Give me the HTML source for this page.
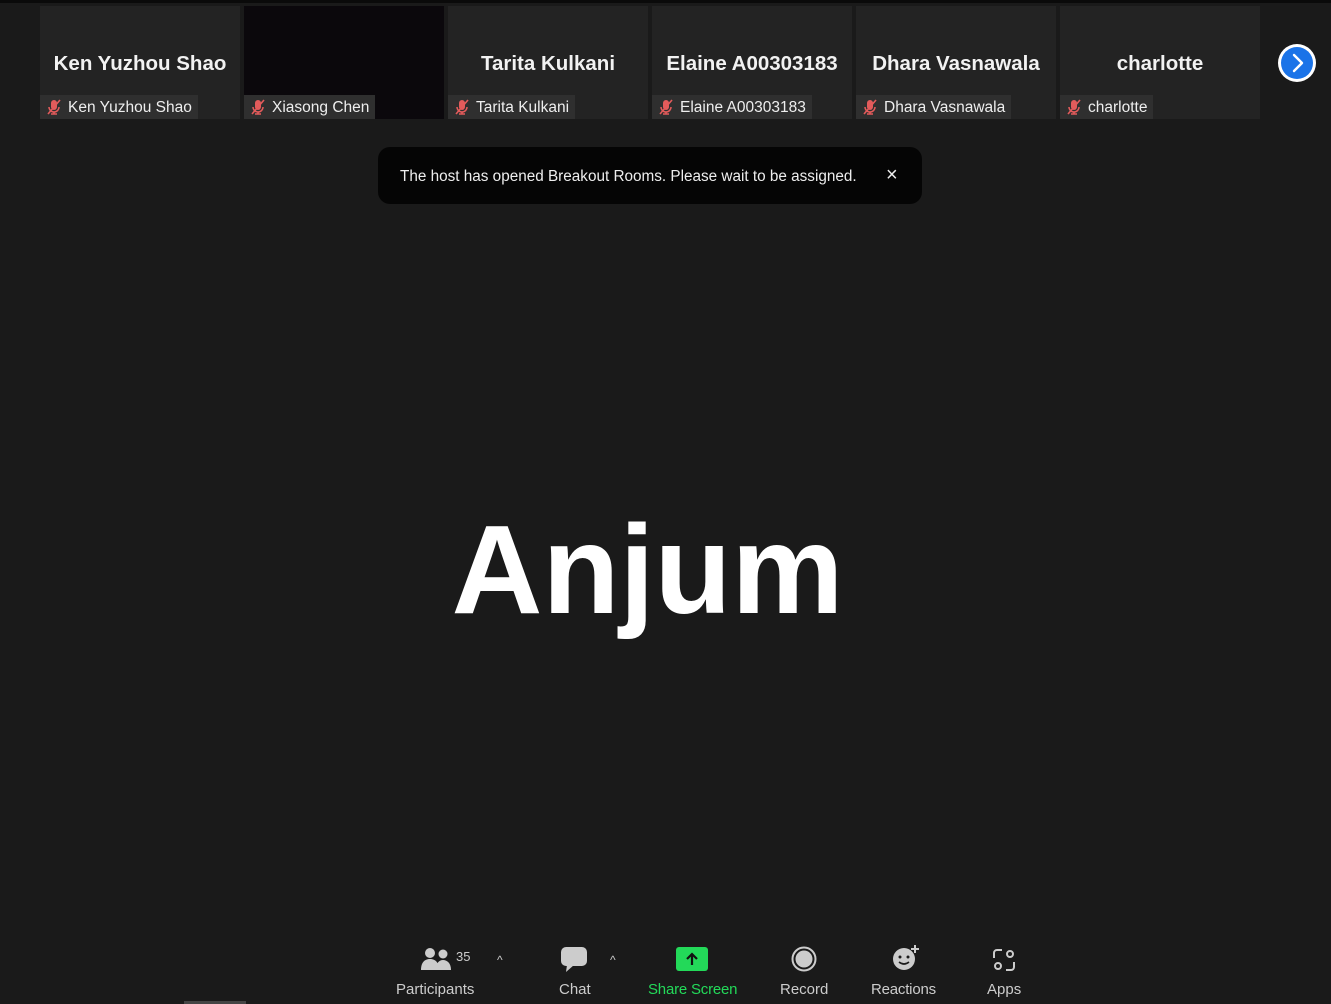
<!DOCTYPE html>
<html><head><style>
body{margin:0;width:1331px;height:1004px;background:#1a1a1a;font-family:"Liberation Sans",sans-serif;position:relative;overflow:hidden;color:#fff}
.top{position:absolute;left:0;top:0;width:1331px;height:3px;background:#0a0a0a}
.tile{position:absolute;top:6px;width:200px;height:113px;background:#232323}
.tile .big{position:absolute;top:46px;left:0;width:100%;text-align:center;font-weight:bold;font-size:20.5px;color:#f2f2f2;white-space:nowrap}
.tile .lbl{position:absolute;left:0;bottom:0;height:24px;line-height:26px;background:#2f2f2f;font-size:15.5px;color:#eee;padding:0 6px 0 28px;white-space:nowrap}
.mic{position:absolute;left:6px;top:4px}
.toast{position:absolute;left:378px;top:147px;width:544px;height:57px;background:#050505;border-radius:12px;font-size:15.3px;color:#eee}
.toast span{position:absolute;left:22px;top:21px}
.toast b{position:absolute;left:508px;top:17px;font-weight:normal;font-size:20px}
.anjum{position:absolute;left:0;width:1295px;top:497px;text-align:center;font-weight:bold;font-size:126px;color:#fff}
.tb{position:absolute;top:981px;font-size:15px;color:#ccc}
</style></head><body>
<div class="top"></div>
<div class="tile" style="left:40px"><div class="big">Ken Yuzhou Shao</div><div class="lbl"><svg class="mic" width="16" height="16" viewBox="0 0 16 16"><rect x="5" y="1" width="6" height="10" rx="3" fill="#e35b5b"/><path d="M3 8a5 5 0 0 0 10 0M8 13v2M5 15h6" stroke="#e35b5b" stroke-width="1.5" fill="none"/><path d="M2 15L14 1" stroke="#e35b5b" stroke-width="1.6"/></svg>Ken Yuzhou Shao</div></div>
<div class="tile" style="left:244px;background:#0b080c"><div class="lbl"><svg class="mic" width="16" height="16" viewBox="0 0 16 16"><rect x="5" y="1" width="6" height="10" rx="3" fill="#e35b5b"/><path d="M3 8a5 5 0 0 0 10 0M8 13v2M5 15h6" stroke="#e35b5b" stroke-width="1.5" fill="none"/><path d="M2 15L14 1" stroke="#e35b5b" stroke-width="1.6"/></svg>Xiasong Chen</div></div>
<div class="tile" style="left:448px"><div class="big">Tarita Kulkani</div><div class="lbl"><svg class="mic" width="16" height="16" viewBox="0 0 16 16"><rect x="5" y="1" width="6" height="10" rx="3" fill="#e35b5b"/><path d="M3 8a5 5 0 0 0 10 0M8 13v2M5 15h6" stroke="#e35b5b" stroke-width="1.5" fill="none"/><path d="M2 15L14 1" stroke="#e35b5b" stroke-width="1.6"/></svg>Tarita Kulkani</div></div>
<div class="tile" style="left:652px"><div class="big">Elaine A00303183</div><div class="lbl"><svg class="mic" width="16" height="16" viewBox="0 0 16 16"><rect x="5" y="1" width="6" height="10" rx="3" fill="#e35b5b"/><path d="M3 8a5 5 0 0 0 10 0M8 13v2M5 15h6" stroke="#e35b5b" stroke-width="1.5" fill="none"/><path d="M2 15L14 1" stroke="#e35b5b" stroke-width="1.6"/></svg>Elaine A00303183</div></div>
<div class="tile" style="left:856px"><div class="big">Dhara Vasnawala</div><div class="lbl"><svg class="mic" width="16" height="16" viewBox="0 0 16 16"><rect x="5" y="1" width="6" height="10" rx="3" fill="#e35b5b"/><path d="M3 8a5 5 0 0 0 10 0M8 13v2M5 15h6" stroke="#e35b5b" stroke-width="1.5" fill="none"/><path d="M2 15L14 1" stroke="#e35b5b" stroke-width="1.6"/></svg>Dhara Vasnawala</div></div>
<div class="tile" style="left:1060px"><div class="big">charlotte</div><div class="lbl"><svg class="mic" width="16" height="16" viewBox="0 0 16 16"><rect x="5" y="1" width="6" height="10" rx="3" fill="#e35b5b"/><path d="M3 8a5 5 0 0 0 10 0M8 13v2M5 15h6" stroke="#e35b5b" stroke-width="1.5" fill="none"/><path d="M2 15L14 1" stroke="#e35b5b" stroke-width="1.6"/></svg>charlotte</div></div>
<svg style="position:absolute;left:1277px;top:43px" width="40" height="40" viewBox="0 0 40 40"><circle cx="20" cy="20" r="19" fill="#fff"/><circle cx="20" cy="20" r="16" fill="#1a73e8"/><path d="M17 12l8 8-8 8" stroke="#fff" stroke-width="2.4" fill="none" stroke-linecap="round" stroke-linejoin="round"/></svg>
<div class="toast"><span>The host has opened Breakout Rooms. Please wait to be assigned.</span><b>×</b></div>
<div class="anjum">Anjum</div>

<svg style="position:absolute;left:420px;top:946px" width="34" height="26" viewBox="0 0 34 26"><circle cx="10" cy="7" r="5" fill="#ccc"/><path d="M1 24c0-8 4-11 9-11s9 3 9 11z" fill="#ccc"/><circle cx="23" cy="8" r="4.5" fill="#ccc"/><path d="M16 24c0-7 3-10 7-10s8 3 8 10z" fill="#ccc"/></svg>
<div class="tb" style="left:456px;top:949px;font-size:13px">35</div>
<div class="tb" style="left:497px;top:953px;font-size:12px">^</div>
<div class="tb" style="left:396px">Participants</div>
<svg style="position:absolute;left:560px;top:946px" width="28" height="28" viewBox="0 0 28 28"><rect x="1" y="1" width="26" height="19" rx="5" fill="#ccc"/><path d="M7 19l-1 7 8-7z" fill="#ccc"/></svg>
<div class="tb" style="left:610px;top:953px;font-size:12px">^</div>
<div class="tb" style="left:559px">Chat</div>
<svg style="position:absolute;left:676px;top:947px" width="32" height="24" viewBox="0 0 32 24"><rect width="32" height="24" rx="3" fill="#23d959"/><path d="M16 18V7M11 12l5-5 5 5" stroke="#111" stroke-width="2.2" fill="none"/></svg>
<div class="tb" style="left:648px;color:#23d959;letter-spacing:-0.2px">Share Screen</div>
<svg style="position:absolute;left:791px;top:946px" width="26" height="26" viewBox="0 0 26 26"><circle cx="13" cy="13" r="11.5" fill="none" stroke="#ccc" stroke-width="2"/><circle cx="13" cy="13" r="8.5" fill="#ccc"/></svg>
<div class="tb" style="left:780px">Record</div>
<svg style="position:absolute;left:891px;top:944px" width="30" height="28" viewBox="0 0 30 28"><circle cx="13" cy="15" r="11" fill="#ccc"/><circle cx="9" cy="13" r="1.5" fill="#1a1a1a"/><circle cx="17" cy="13" r="1.5" fill="#1a1a1a"/><path d="M8 18q5 4 10 0" stroke="#1a1a1a" stroke-width="1.6" fill="none"/><path d="M24 1v8M20 5h8" stroke="#ccc" stroke-width="2"/></svg>
<div class="tb" style="left:871px;letter-spacing:-0.2px">Reactions</div>
<svg style="position:absolute;left:992px;top:948px" width="24" height="24" viewBox="0 0 24 24"><path d="M2 10V5a3 3 0 0 1 3-3h5M22 14v5a3 3 0 0 1-3 3h-5" stroke="#ccc" stroke-width="2" fill="none"/><circle cx="18" cy="6" r="3" stroke="#ccc" stroke-width="2" fill="none"/><circle cx="6" cy="18" r="3" stroke="#ccc" stroke-width="2" fill="none"/></svg>
<div class="tb" style="left:987px">Apps</div>
<div style="position:absolute;left:184px;top:1001px;width:62px;height:3px;background:#444"></div>
</body></html>
